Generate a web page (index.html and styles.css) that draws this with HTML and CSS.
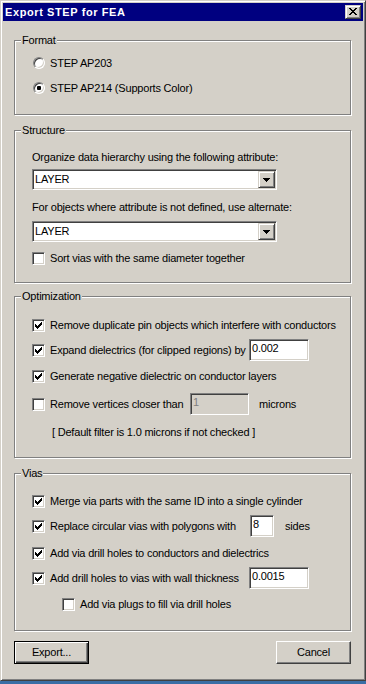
FILE: index.html
```html
<!DOCTYPE html>
<html>
<head>
<meta charset="utf-8">
<title>Export STEP for FEA</title>
<link rel="stylesheet" href="styles.css">
</head>
<body>
<div class="window">
  <div class="titlebar">
    <span class="title">Export STEP for FEA</span>
    <span class="close-btn"><svg width="8" height="7" viewBox="0 0 8 7" shape-rendering="crispEdges"><path d="M0 0h2v1H0zM6 0h2v1H6zM1 1h2v1H1zM5 1h2v1H5zM2 2h4v1H2zM3 3h2v1H3zM2 4h4v1H2zM1 5h2v1H1zM5 5h2v1H5zM0 6h2v1H0zM6 6h2v1H6z" fill="#000"/></svg></span>
  </div>
  <div class="client">
    <div class="group g-format">
      <span class="group-title">Format</span>
      <div class="row"><span class="radio"></span><span>STEP AP203</span></div>
      <div class="row mt3"><span class="radio checked"></span><span>STEP AP214 (Supports Color)</span></div>
    </div>

    <div class="group g-structure">
      <span class="group-title">Structure</span>
      <div class="row">Organize data hierarchy using the following attribute:</div>
      <div class="combo mt1"><span class="combo-text">LAYER</span><span class="combo-btn"><svg width="7" height="4" viewBox="0 0 7 4" shape-rendering="crispEdges"><path d="M0 0h7v1H0zM1 1h5v1H1zM2 2h3v1H2zM3 3h1v1H3z" fill="#000"/></svg></span></div>
      <div class="row mt6">For objects where attribute is not defined, use alternate:</div>
      <div class="combo mt3"><span class="combo-text">LAYER</span><span class="combo-btn"><svg width="7" height="4" viewBox="0 0 7 4" shape-rendering="crispEdges"><path d="M0 0h7v1H0zM1 1h5v1H1zM2 2h3v1H2zM3 3h1v1H3z" fill="#000"/></svg></span></div>
      <div class="row mt5"><span class="check"></span><span>Sort vias with the same diameter together</span></div>
    </div>

    <div class="group g-opt">
      <span class="group-title">Optimization</span>
      <div class="row"><span class="check checked"><svg width="7" height="7" viewBox="0 0 7 7" shape-rendering="crispEdges"><path d="M6 0h1v1H6zM5 1h2v1H5zM0 2h1v1H0zM4 2h3v1H4zM0 3h2v1H0zM3 3h3v1H3zM0 4h5v1H0zM1 5h3v1H1zM2 6h1v1H2z" fill="#000"/></svg></span><span>Remove duplicate pin objects which interfere with conductors</span></div>
      <div class="row mt3"><span class="check checked"><svg width="7" height="7" viewBox="0 0 7 7" shape-rendering="crispEdges"><path d="M6 0h1v1H6zM5 1h2v1H5zM0 2h1v1H0zM4 2h3v1H4zM0 3h2v1H0zM3 3h3v1H3zM0 4h5v1H0zM1 5h3v1H1zM2 6h1v1H2z" fill="#000"/></svg></span><span class="lbl-199">Expand dielectrics (for clipped regions) by</span><span class="edit w60">0.002</span></div>
      <div class="row mt4"><span class="check checked"><svg width="7" height="7" viewBox="0 0 7 7" shape-rendering="crispEdges"><path d="M6 0h1v1H6zM5 1h2v1H5zM0 2h1v1H0zM4 2h3v1H4zM0 3h2v1H0zM3 3h3v1H3zM0 4h5v1H0zM1 5h3v1H1zM2 6h1v1H2z" fill="#000"/></svg></span><span>Generate negative dielectric on conductor layers</span></div>
      <div class="row mt6"><span class="check"></span><span class="lbl-140">Remove vertices closer than</span><span class="edit w59 disabled">1</span><span class="unit">microns</span></div>
      <div class="row mt6 note">[ Default filter is 1.0 microns if not checked ]</div>
    </div>

    <div class="group g-vias">
      <span class="group-title">Vias</span>
      <div class="row"><span class="check checked"><svg width="7" height="7" viewBox="0 0 7 7" shape-rendering="crispEdges"><path d="M6 0h1v1H6zM5 1h2v1H5zM0 2h1v1H0zM4 2h3v1H4zM0 3h2v1H0zM3 3h3v1H3zM0 4h5v1H0zM1 5h3v1H1zM2 6h1v1H2z" fill="#000"/></svg></span><span>Merge via parts with the same ID into a single cylinder</span></div>
      <div class="row mt3"><span class="check checked"><svg width="7" height="7" viewBox="0 0 7 7" shape-rendering="crispEdges"><path d="M6 0h1v1H6zM5 1h2v1H5zM0 2h1v1H0zM4 2h3v1H4zM0 3h2v1H0zM3 3h3v1H3zM0 4h5v1H0zM1 5h3v1H1zM2 6h1v1H2z" fill="#000"/></svg></span><span class="lbl-200">Replace circular vias with polygons with</span><span class="edit w24">8</span><span class="unit unit-sides">sides</span></div>
      <div class="row mt5"><span class="check checked"><svg width="7" height="7" viewBox="0 0 7 7" shape-rendering="crispEdges"><path d="M6 0h1v1H6zM5 1h2v1H5zM0 2h1v1H0zM4 2h3v1H4zM0 3h2v1H0zM3 3h3v1H3zM0 4h5v1H0zM1 5h3v1H1zM2 6h1v1H2z" fill="#000"/></svg></span><span>Add via drill holes to conductors and dielectrics</span></div>
      <div class="row mt3"><span class="check checked"><svg width="7" height="7" viewBox="0 0 7 7" shape-rendering="crispEdges"><path d="M6 0h1v1H6zM5 1h2v1H5zM0 2h1v1H0zM4 2h3v1H4zM0 3h2v1H0zM3 3h3v1H3zM0 4h5v1H0zM1 5h3v1H1zM2 6h1v1H2z" fill="#000"/></svg></span><span class="lbl-199">Add drill holes to vias with wall thickness</span><span class="edit w60">0.0015</span></div>
      <div class="row mt4 indent"><span class="check"></span><span>Add via plugs to fill via drill holes</span></div>
    </div>

    <div class="buttons">
      <span class="btn default">Export...</span>
      <span class="btn">Cancel</span>
    </div>
  </div>
</div>
</body>
</html>
```

FILE: styles.css
```css
* { box-sizing: border-box; }
html, body { margin: 0; padding: 0; }
body {
  width: 366px;
  height: 684px;
  overflow: hidden;
  background: #3a6ea5;
  font-family: "Liberation Sans", Arial, sans-serif;
  font-size: 11px;
  line-height: 13px;
  letter-spacing: -0.2px;
  color: #000;
}
.window {
  width: 366px;
  height: 681px;
  background: #d4d0c8;
  border: 1px solid;
  border-color: #d4d0c8 #404040 #404040 #d4d0c8;
  box-shadow: inset 1px 1px #fff, inset -1px -1px #808080;
  padding: 2px;
  display: flex;
  flex-direction: column;
}
.titlebar {
  height: 18px;
  flex: none;
  background: #000080;
  display: flex;
  align-items: center;
  justify-content: space-between;
  padding: 0 2px 0 2px;
}
.title { color: #fff; font-weight: bold; letter-spacing: 0.6px; }
.close-btn {
  width: 16px;
  height: 14px;
  background: #d4d0c8;
  border: 1px solid;
  border-color: #d4d0c8 #404040 #404040 #d4d0c8;
  box-shadow: inset 1px 1px #fff, inset -1px -1px #808080;
  display: flex;
  align-items: center;
  justify-content: center;
  padding-bottom: 1px;
}
.close-btn svg { display: block; }
.client { padding: 19px 12px 0 11px; }
.group {
  position: relative;
  border: 1px solid #808080;
  box-shadow: inset 1px 1px #fff, 1px 1px #fff;
  padding-left: 17px;
  display: flex;
  flex-direction: column;
}
.group-title {
  position: absolute;
  top: -7px;
  left: 6px;
  padding: 0 1px;
  background: #d4d0c8;
  white-space: nowrap;
}
.g-format { padding-top: 11px; padding-bottom: 15px; }
.g-structure { margin-top: 15px; padding-top: 15px; padding-bottom: 13px; }
.g-opt { margin-top: 13px; padding-top: 17px; padding-bottom: 14px; }
.g-vias { margin-top: 15px; padding-top: 16px; padding-bottom: 15px; }

.row {
  height: 22px;
  display: flex;
  align-items: center;
  gap: 5px;
  white-space: nowrap;
}
.mt1 { margin-top: 1px; }
.mt3 { margin-top: 3px; }
.mt4 { margin-top: 4px; }
.mt5 { margin-top: 5px; }
.mt6 { margin-top: 6px; }
.note { padding-left: 20px; }
.indent { margin-left: 30px; }

.radio {
  flex: none;
  width: 12px;
  height: 12px;
  margin-left: 1px;
  border-radius: 50%;
  background: #fff;
  border: 1px solid;
  border-color: #808080 #fff #fff #808080;
  box-shadow: inset 1px 1px #404040, inset -1px -1px #d4d0c8;
  position: relative;
}
.radio.checked::after {
  content: "";
  position: absolute;
  left: 3px;
  top: 3px;
  width: 4px;
  height: 4px;
  border-radius: 1px;
  background: #000;
}
.check {
  flex: none;
  width: 13px;
  height: 13px;
  background: #fff;
  border: 1px solid;
  border-color: #808080 #fff #fff #808080;
  box-shadow: inset 1px 1px #404040, inset -1px -1px #d4d0c8;
  padding: 2px;
}
.check svg { display: block; }

.lbl-199 { width: 199px; flex: none; }
.lbl-200 { width: 200px; flex: none; }
.lbl-140 { width: 140px; flex: none; }
.row .lbl-199 + .edit, .row .lbl-200 + .edit, .row .lbl-140 + .edit { margin-left: -5px; }

.edit {
  flex: none;
  height: 22px;
  background: #fff;
  border: 1px solid;
  border-color: #808080 #fff #fff #808080;
  box-shadow: inset 1px 1px #404040, inset -1px -1px #d4d0c8;
  padding: 2px 0 0 2px;
  align-self: center;
}
.edit.disabled { background: #d4d0c8; color: #808080; }
.w60 { width: 60px; }
.w59 { width: 59px; }
.w24 { width: 24px; }
.unit { margin-left: 5px; }
.unit-sides { margin-left: 6px; }

.combo {
  width: 245px;
  height: 21px;
  background: #fff;
  border: 1px solid;
  border-color: #808080 #fff #fff #808080;
  box-shadow: inset 1px 1px #404040, inset -1px -1px #d4d0c8;
  padding: 1px;
  display: flex;
}
.combo-text { flex: 1; padding: 2px 0 0 1px; }
.combo-btn {
  width: 17px;
  height: 17px;
  background: #d4d0c8;
  border: 1px solid;
  border-color: #d4d0c8 #404040 #404040 #d4d0c8;
  box-shadow: inset 1px 1px #fff, inset -1px -1px #808080;
  display: flex;
  align-items: center;
  justify-content: center;
}
.combo-btn svg { display: block; }

.buttons {
  display: flex;
  justify-content: space-between;
  margin-top: 10px;
}
.btn {
  width: 75px;
  height: 23px;
  display: flex;
  align-items: center;
  justify-content: center;
  background: #d4d0c8;
  border: 1px solid;
  border-color: #fff #404040 #404040 #fff;
  box-shadow: inset -1px -1px #808080;
}
.btn.default {
  border-color: #000;
  box-shadow: inset 1px 1px #fff, inset -1px -1px #404040, inset -2px -2px #808080;
}
```
